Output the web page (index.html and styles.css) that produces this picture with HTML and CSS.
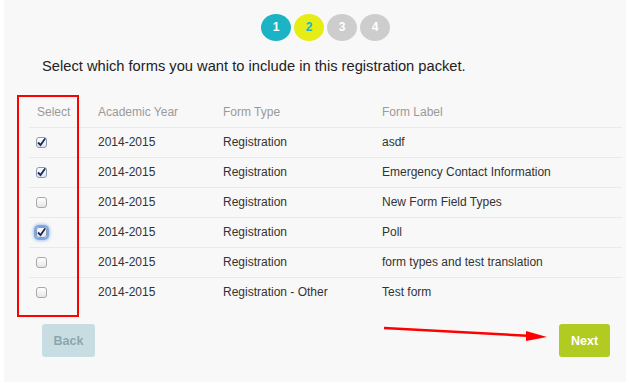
FILE: index.html
```html
<!DOCTYPE html>
<html lang="en">
<head>
    <meta charset="UTF-8">
    <meta name="viewport" content="width=device-width, initial-scale=1.0">
    <title>Registration Packet - Select Forms</title>
    <link rel="stylesheet" href="styles.css">
</head>
<body>
    <div class="page">
        <div class="steps">
            <span class="step step-done">1</span>
            <span class="step step-current">2</span>
            <span class="step">3</span>
            <span class="step">4</span>
        </div>

        <h1 class="intro">Select which forms you want to include in this registration packet.</h1>

        <table class="forms">
            <thead>
                <tr>
                    <th class="col-select">Select</th>
                    <th class="col-year">Academic Year</th>
                    <th class="col-type">Form Type</th>
                    <th>Form Label</th>
                </tr>
            </thead>
            <tbody>
                <tr>
                    <td><input type="checkbox" class="check" checked></td>
                    <td>2014-2015</td>
                    <td>Registration</td>
                    <td>asdf</td>
                </tr>
                <tr>
                    <td><input type="checkbox" class="check" checked></td>
                    <td>2014-2015</td>
                    <td>Registration</td>
                    <td>Emergency Contact Information</td>
                </tr>
                <tr>
                    <td><input type="checkbox" class="check"></td>
                    <td>2014-2015</td>
                    <td>Registration</td>
                    <td>New Form Field Types</td>
                </tr>
                <tr>
                    <td><input type="checkbox" class="check focused" checked></td>
                    <td>2014-2015</td>
                    <td>Registration</td>
                    <td>Poll</td>
                </tr>
                <tr>
                    <td><input type="checkbox" class="check"></td>
                    <td>2014-2015</td>
                    <td>Registration</td>
                    <td>form types and test translation</td>
                </tr>
                <tr>
                    <td><input type="checkbox" class="check"></td>
                    <td>2014-2015</td>
                    <td>Registration - Other</td>
                    <td>Test form</td>
                </tr>
            </tbody>
        </table>

        <div class="actions">
            <button class="btn btn-back" disabled>Back</button>
            <button class="btn btn-next">Next</button>
        </div>

        <!-- annotations -->
        <div class="mark-box"></div>
        <svg class="mark-arrow" width="180" height="20" viewBox="0 0 180 20">
            <line x1="2" y1="3" x2="150" y2="11" stroke="#f00" stroke-width="2.5"/>
            <polygon points="144,6 165,12 144,16" fill="#f00"/>
        </svg>
    </div>
</body>
</html>
```

FILE: styles.css
```css
* {
    margin: 0;
    padding: 0;
    box-sizing: border-box;
}

body {
    font-family: "Liberation Sans", Arial, sans-serif;
    background: white;
    color: #333;
}

.page {
    position: relative;
    margin-left: 4px;
    width: 622px;
    height: 382px;
    background: #f8f8f8;
}

.steps {
    display: flex;
    justify-content: center;
    gap: 3px;
    padding: 14px 0 0 21px;
}

.step {
    width: 30px;
    height: 27px;
    border-radius: 50%;
    background: #cdcdcd;
    color: white;
    font-size: 12px;
    font-weight: bold;
    line-height: 27px;
    text-align: center;
}

.step-done {
    background: #1cb4c4;
}

.step-current {
    background: #e6ec16;
    color: #1cb4c4;
}

.intro {
    margin: 15px 0 0 38px;
    font-size: 14.7px;
    font-weight: normal;
    line-height: 20px;
    color: #222;
}

.forms {
    margin: 21px 0 0 25px;
    width: 593px;
    border-collapse: collapse;
    font-size: 12px;
}

.forms th,
.forms td {
    height: 30px;
    padding: 0 8px;
    text-align: left;
    vertical-align: middle;
    border-bottom: 1px solid #e9e9e9;
}

.forms th {
    font-weight: normal;
    color: #9a9a9a;
}

.forms tbody tr:last-child td {
    border-bottom: none;
}

.col-select {
    width: 61px;
}

.col-year {
    width: 125px;
}

.col-type {
    width: 159px;
}

.check {
    appearance: none;
    display: block;
    width: 11px;
    height: 11px;
    margin-left: -1px;
    border: 1px solid #a8a8a8;
    border-radius: 3px;
    background: linear-gradient(#fff, #e6e6e6);
}

.check:checked {
    border-color: #8a9ab0;
    background: url("data:image/svg+xml;utf8,<svg xmlns='http://www.w3.org/2000/svg' viewBox='0 0 11 11'><path d='M2 5.5 L4.5 8 L9.5 1' fill='none' stroke='%231c2a5a' stroke-width='1.8'/></svg>") no-repeat center / 11px 11px, linear-gradient(#fff, #dfe6f0);
}

.check.focused {
    box-shadow: 0 0 0 2px #7ea7e0, 0 0 3px 3px #a9c6ef;
}

.actions {
    display: flex;
    justify-content: space-between;
    margin: 17px 16px 0 38px;
}

.btn {
    height: 33px;
    border: none;
    border-radius: 3px;
    font-family: inherit;
    font-size: 12.5px;
    font-weight: bold;
}

.btn-back {
    width: 53px;
    background: #c8dde2;
    color: #8ca6ad;
}

.btn-next {
    width: 51px;
    background: #b2cb22;
    color: white;
}

.mark-box {
    position: absolute;
    left: 13px;
    top: 95px;
    width: 62px;
    height: 222px;
    border: 2.5px solid #f00;
}

.mark-arrow {
    position: absolute;
    left: 378px;
    top: 325px;
}
```
